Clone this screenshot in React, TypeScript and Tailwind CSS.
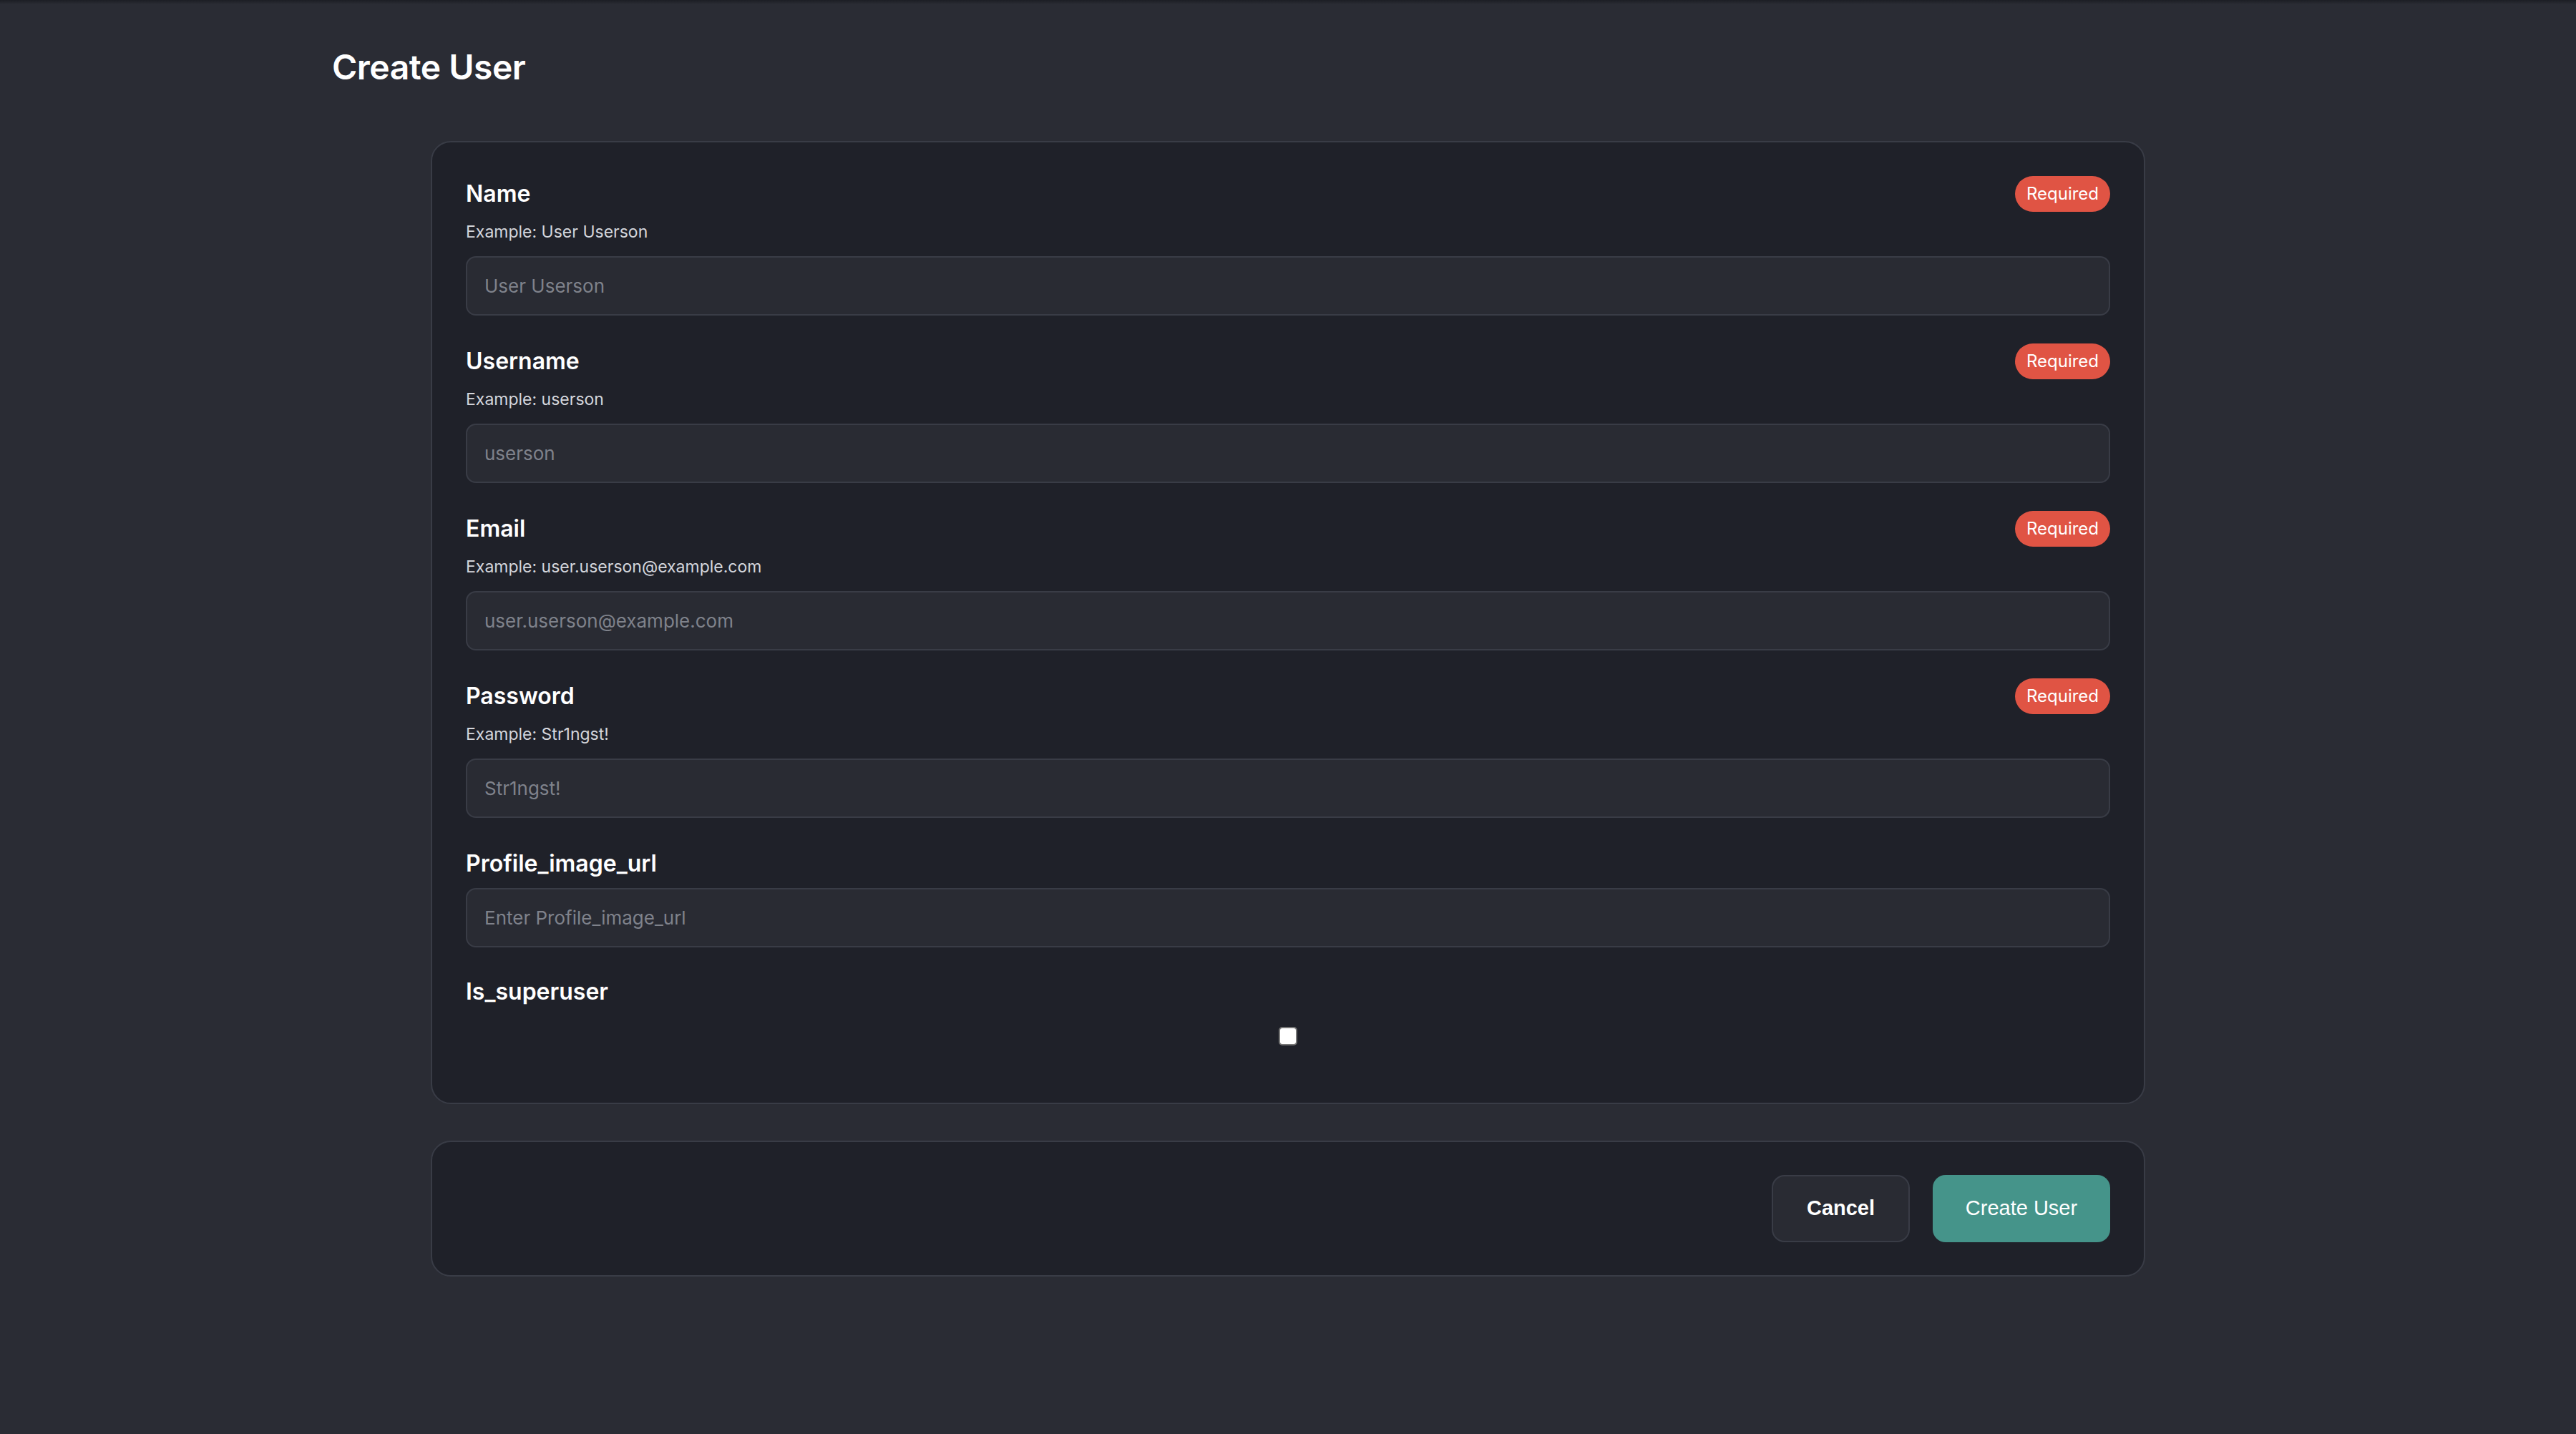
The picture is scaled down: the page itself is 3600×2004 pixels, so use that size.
import React from "react";

const fields = [
  { label: "Name", example: "Example: User Userson", ph: "User Userson" },
  { label: "Username", example: "Example: userson", ph: "userson" },
  { label: "Email", example: "Example: user.userson@example.com", ph: "user.userson@example.com" },
  { label: "Password", example: "Example: Str1ngst!", ph: "Str1ngst!" },
];

export default function App() {
  return (
    <div className="min-h-[2004px] w-full bg-[#2a2c34] text-white" style={{ fontFamily: "Inter, 'Noto Sans', sans-serif" }}>
      <div className="h-[6px] bg-gradient-to-b from-[#1c1e24] to-[#2a2c34]" />
      <div className="pl-[464px] pt-[58px]">
        <h1 className="text-[48px] leading-[60px] font-semibold tracking-[-0.5px]">Create User</h1>
      </div>
      <div className="mx-auto mt-[73px] w-[2396px]">
        <div className="rounded-[28px] border-2 border-[#393c46] bg-[#1f2129] px-[47px] pt-[47px] pb-[80px]">
          {fields.map((f) => (
            <div key={f.label} className="mb-[39px]">
              <div className="flex h-[50px] items-center justify-between">
                <span className="text-[32px] font-semibold">{f.label}</span>
                <span className="flex h-[50px] w-[133px] items-center justify-center rounded-full bg-[#e05444] text-[24px] text-white">Required</span>
              </div>
              <div className="mt-[12px] h-[32px] text-[23px] leading-[32px] text-[#d4d6dc]">{f.example}</div>
              <div className="mt-[18px] flex h-[83px] items-center rounded-[14px] border-2 border-[#393c46] bg-[#292b33] px-[24px] text-[26px] text-[#7f828b]">
                {f.ph}
              </div>
            </div>
          ))}
          <div className="flex h-[50px] items-center">
            <span className="text-[32px] font-semibold">Profile_image_url</span>
          </div>
          <div className="mt-[9px] flex h-[83px] items-center rounded-[14px] border-2 border-[#393c46] bg-[#292b33] px-[24px] text-[26px] text-[#7f828b]">
            Enter Profile_image_url
          </div>
          <div className="mt-[37px] flex h-[50px] items-center">
            <span className="text-[32px] font-semibold">Is_superuser</span>
          </div>
          <div className="mt-[24px] flex justify-center">
            <div className="h-[26px] w-[26px] rounded-[5px] border-2 border-[#767676] bg-white" />
          </div>
        </div>
        <div className="mt-[51px] flex justify-end gap-[32px] rounded-[28px] border-2 border-[#393c46] bg-[#1f2129] px-[47px] py-[46px]" style={{ fontFamily: "'Liberation Sans', Arial, sans-serif" }}>
          <button className="h-[94px] w-[193px] rounded-[18px] border-2 border-[#393c46] bg-[#292b33] text-[29px] font-bold text-white">Cancel</button>
          <button className="h-[94px] w-[248px] rounded-[18px] bg-[#45948a] text-[29px] text-white">Create User</button>
        </div>
      </div>
    </div>
  );
}
